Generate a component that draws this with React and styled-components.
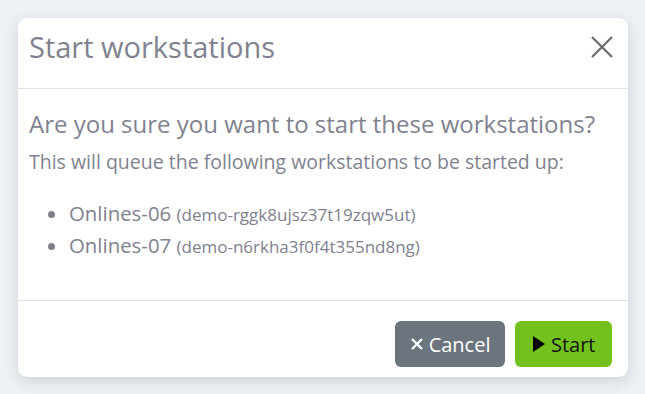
import React from "react";
import styled, { createGlobalStyle } from "styled-components";

const GlobalStyle = createGlobalStyle`
  html, body {
    margin: 0;
    padding: 0;
    background: #edf1f5;
    font-family: "Open Sans", Lato, sans-serif;
  }
`;

const workstations = [
  { name: "Onlines-06", id: "demo-rggk8ujsz37t19zqw5ut" },
  { name: "Onlines-07", id: "demo-n6rkha3f0f4t355nd8ng" },
];

// page backdrop
const Page = styled.div`
  padding: 18px 17px 17px 18px;
  height: 394px;
  box-sizing: border-box;
`;

const Modal = styled.div`
  background: #fff;
  border-radius: 9px;
  box-shadow: 0 4px 14px rgba(60, 70, 90, 0.18);
  display: flex;
  flex-direction: column;
  height: 359px;
`;

const Header = styled.div`
  display: flex;
  align-items: center;
  justify-content: space-between;
  height: 70px;
  padding: 0 15px 0 11px;
  border-bottom: 1px solid #dee2e6;
`;

const Title = styled.h2`
  margin: 0 0 13px;
  font-size: 29px;
  line-height: 36px;
  font-weight: 400;
  color: #80828f;
`;

const Close = styled.button`
  border: 0;
  background: none;
  padding: 0;
  margin-bottom: 13px;
  display: flex;
  cursor: pointer;
`;

const Body = styled.div`
  flex: 1;
  padding: 20px 11px 0;
  border-bottom: 1px solid #dee2e6;
`;

const Question = styled.h3`
  margin: 0 0 9px;
  font-size: 24px;
  line-height: 30px;
  font-weight: 400;
  color: #80828f;
`;

const Info = styled.p`
  margin: 0 0 22px;
  font-size: 19.5px;
  line-height: 28px;
  color: #80828f;
`;

const List = styled.ul`
  margin: 0;
  padding-left: 40px;
  color: #80828f;
`;

const Item = styled.li`
  font-size: 20.4px;
  line-height: 30px;
`;

const Slug = styled.small`
  font-size: 17px;
`;

const Footer = styled.div`
  display: flex;
  justify-content: flex-end;
  gap: 10px;
  padding: 20px 16px 10px;
`;

const Button = styled.button`
  display: flex;
  align-items: center;
  gap: 5px;
  height: 46px;
  padding: 0 ${(p) => (p.$variant === "success" ? "16.5px" : "15px")};
  border: 0;
  border-radius: 6px;
  font-family: inherit;
  font-size: 20px;
  background: ${(p) => (p.$variant === "success" ? "#72c11d" : "#6c757d")};
  color: ${(p) => (p.$variant === "success" ? "#111" : "#fff")};
`;

const App = () => (
  <>
    <GlobalStyle />
    <Page>
      <Modal>
        <Header>
          <Title>Start workstations</Title>
          <Close aria-label="Close">
            <svg width="22" height="22" viewBox="0 0 22 22">
              <path d="M1 1L21 21M21 1L1 21" stroke="#6c6c6c" strokeWidth="2.2" />
            </svg>
          </Close>
        </Header>
        <Body>
          <Question>Are you sure you want to start these workstations?</Question>
          <Info>This will queue the following workstations to be started up:</Info>
          <List>
            {workstations.map((w) => (
              <Item key={w.id}>
                {w.name} <Slug>({w.id})</Slug>
              </Item>
            ))}
          </List>
        </Body>
        <Footer>
          <Button>
            <svg width="14" height="14" viewBox="0 0 14 14">
              <path d="M2 2L12 12M12 2L2 12" stroke="#fff" strokeWidth="2.4" />
            </svg>
            Cancel
          </Button>
          <Button $variant="success">
            <svg width="14" height="18" viewBox="0 0 14 18">
              <path d="M1 1L13 9L1 17Z" fill="#000" />
            </svg>
            Start
          </Button>
        </Footer>
      </Modal>
    </Page>
  </>
);

export default App;
